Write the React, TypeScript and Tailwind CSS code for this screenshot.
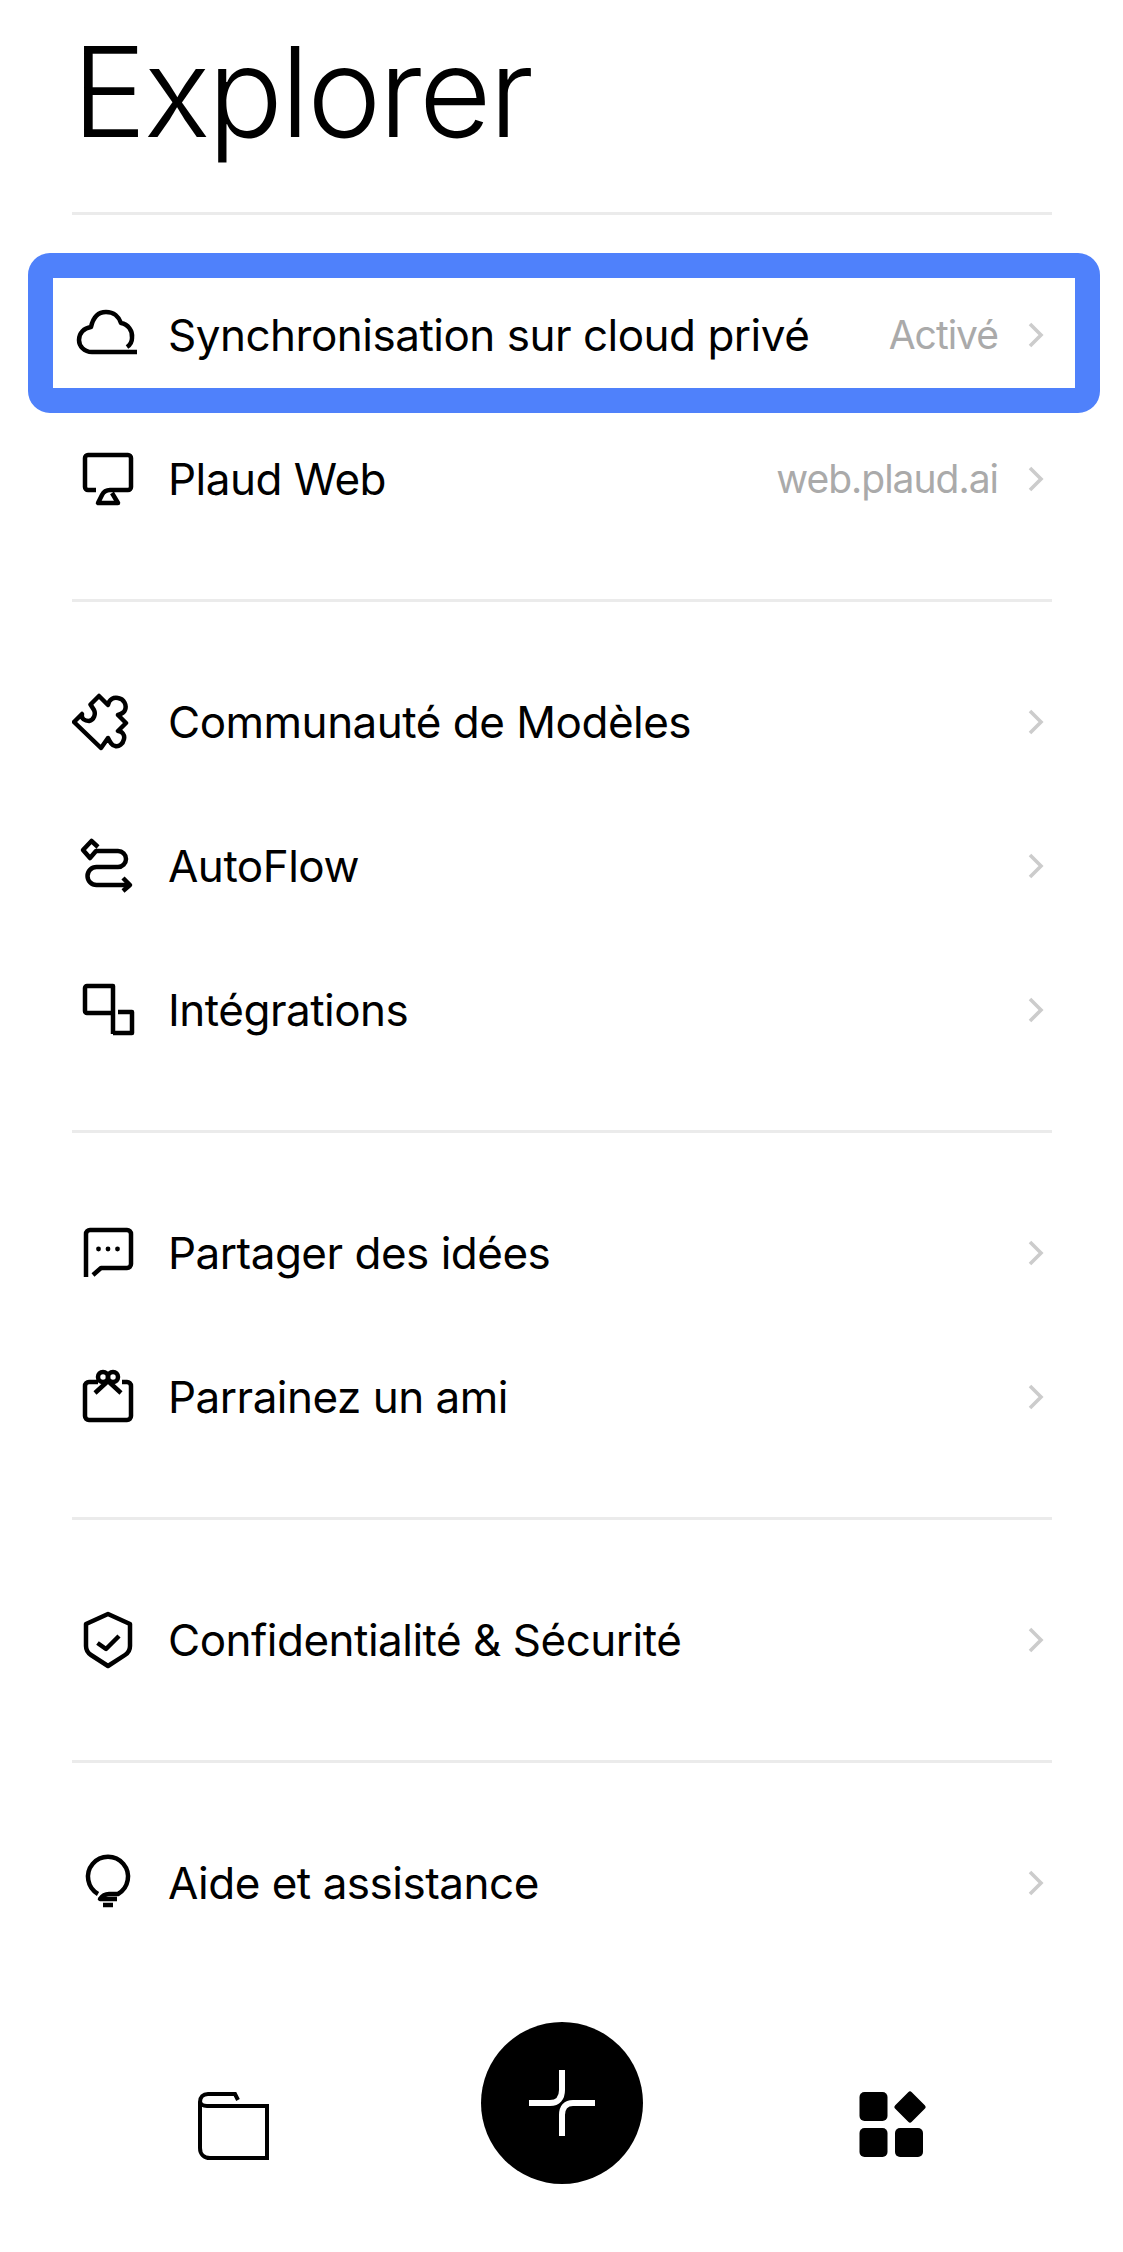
import type { ReactNode } from "react";

function Icon({ children }: { children: ReactNode }) {
  return (
    <svg
      viewBox="0 0 72 72"
      fill="none"
      stroke="#000"
      strokeWidth="4.5"
      strokeLinejoin="round"
      className="w-[72px] h-[72px] shrink-0"
    >
      {children}
    </svg>
  );
}

const icons = {
  cloud: (
    <path d="M65 53H20C12 53 7 47 7 41C7 34 12 29 19 28C21 19 26 13 34 13C42 13 47 18 49 24C56 25 61 32 60 39C60 43 58 46 55 48" />
  ),
  monitor: (
    <path d="M24 47H16a3 3 0 0 1-3-3V15a3 3 0 0 1 3-3H56a3 3 0 0 1 3 3V44a3 3 0 0 1-3 3H38C34 47 32 48 30 52L26 60H46L40 50" />
  ),
  puzzle: (
    <path d="M2 36L10 28C9 33 13 35 17 35C22 34 24 28 22 24L18.5 18.5L27 10L36 19C37 13 42 11 46 12C52 13 55 19 53 24C52 27 49 28 46 29L54 37L46 45C50 45 53 49 52 53C51 58 47 61 43 60C40 60 38 56 36 52L29 62Z" />
  ),
  route: (
    <path d="M26 17L19.5 11L11 20L18 28L24 21H46A8 8 0 0 1 46 37H24.5A9 9 0 0 0 24.5 55H58M51 48L58 55L51 61" />
  ),
  integrations: <path d="M41 39H15a2 2 0 0 1-2-2V14a2 2 0 0 1 2-2H41V60M41 59H60V38H46" />,
  message: (
    <>
      <path d="M14 60V17a4 4 0 0 1 4-4H55a4 4 0 0 1 4 4V47a4 4 0 0 1-4 4H29L21 58" />
      <circle cx="26.5" cy="32" r="2.4" fill="#000" stroke="none" />
      <circle cx="36" cy="32" r="2.4" fill="#000" stroke="none" />
      <circle cx="45.5" cy="32" r="2.4" fill="#000" stroke="none" />
    </>
  ),
  gift: (
    <>
      <path d="M26 21H17a4 4 0 0 0-4 4V55a4 4 0 0 0 4 4H55a4 4 0 0 0 4-4V25a4 4 0 0 0-4-4H50" />
      <circle cx="31" cy="16" r="5" />
      <circle cx="41" cy="16" r="5" />
      <path d="M23 32L36 20L49 32" />
    </>
  ),
  shield: (
    <>
      <path d="M36 10L58 20V42C58 46 56 49 53 51L36 62L19 51C16 49 14 46 14 42V20Z" />
      <path d="M25.5 39L34 45L47 32" />
    </>
  ),
  bulb: (
    <>
      <path d="M26 47A20 20 0 1 1 46 47H37C33 47 30 49 28 52H45" />
      <path d="M31 58H41" />
    </>
  ),
};

type RowItem = { icon: keyof typeof icons; label: string; value?: string; selected?: boolean };

const sections: RowItem[][] = [
  [
    { icon: "cloud", label: "Synchronisation sur cloud privé", value: "Activé", selected: true },
    { icon: "monitor", label: "Plaud Web", value: "web.plaud.ai" },
  ],
  [
    { icon: "puzzle", label: "Communauté de Modèles" },
    { icon: "route", label: "AutoFlow" },
    { icon: "integrations", label: "Intégrations" },
  ],
  [
    { icon: "message", label: "Partager des idées" },
    { icon: "gift", label: "Parrainez un ami" },
  ],
  [{ icon: "shield", label: "Confidentialité & Sécurité" }],
  [{ icon: "bulb", label: "Aide et assistance" }],
];

function Row({ item }: { item: RowItem }) {
  return (
    <div className="relative flex items-center h-[144px] pr-[6px]">
      <Icon>{icons[item.icon]}</Icon>
      <span className="ml-6 flex-1 text-[44px] tracking-[-0.5px] text-black">{item.label}</span>
      {item.value && <span className="text-[39px] tracking-[-1px] text-[#aaaaaa]">{item.value}</span>}
      <svg viewBox="0 0 20 28" fill="none" stroke="#cccccc" strokeWidth="3.6" className="ml-[28px] w-[20px] h-[28px]">
        <path d="M4 3L15 14L4 25" />
      </svg>
      {item.selected && (
        <div className="absolute -left-[44px] -right-[48px] -top-[10px] -bottom-[6px] border-[25px] border-[#4f81fb] rounded-[22px]" />
      )}
    </div>
  );
}

export default function App() {
  return (
    <div className="w-[1123px] h-[2252px] bg-white overflow-hidden font-['Inter',sans-serif]">
      <div className="pl-[72px] pr-[71px]">
        <h1 className="pt-[29px] pb-[58px] text-[125px] tracking-[-2.5px] leading-none font-light text-black">Explorer</h1>
        {sections.map((rows, i) => (
          <div key={i} className="border-t-[3px] border-[#ebebeb] pt-[48px] pb-[48px]">
            {rows.map((item) => (
              <Row key={item.label} item={item} />
            ))}
          </div>
        ))}
      </div>

      <div className="mt-[19px] px-[68px] grid grid-cols-3 items-start">
        <div className="flex justify-center pt-[70px] pl-[2px]">
          <svg viewBox="0 0 72 68" fill="none" stroke="#000" strokeWidth="4" className="w-[72px] h-[68px]">
            <path d="M40 8L37 2H10C5 2 2 5 2 10V56C2 62 6 66 12 66H69V14H9C5 14 2 12 2 9" />
          </svg>
        </div>
        <div className="flex justify-center">
          <div className="w-[162px] h-[162px] rounded-full bg-black flex items-center justify-center">
            <svg viewBox="0 0 72 72" fill="none" stroke="#fff" strokeWidth="6" className="w-[72px] h-[72px]">
              <path d="M36 3V23C36 31 32 36 24 36H3M69 36H47C40 36 36 40 36 48V69" />
            </svg>
          </div>
        </div>
        <div className="flex justify-center pt-[69px] pl-[4px]">
          <svg viewBox="0 0 67 66" className="w-[67px] h-[66px]">
            <rect x="0.5" y="1" width="28" height="29" rx="5" />
            <rect x="0.5" y="37" width="28" height="29" rx="5" />
            <rect x="36" y="37" width="28" height="29" rx="5" />
            <path d="M51 3L64 16L51 29L38 16Z" stroke="#000" strokeWidth="5" strokeLinejoin="round" />
          </svg>
        </div>
      </div>
    </div>
  );
}
